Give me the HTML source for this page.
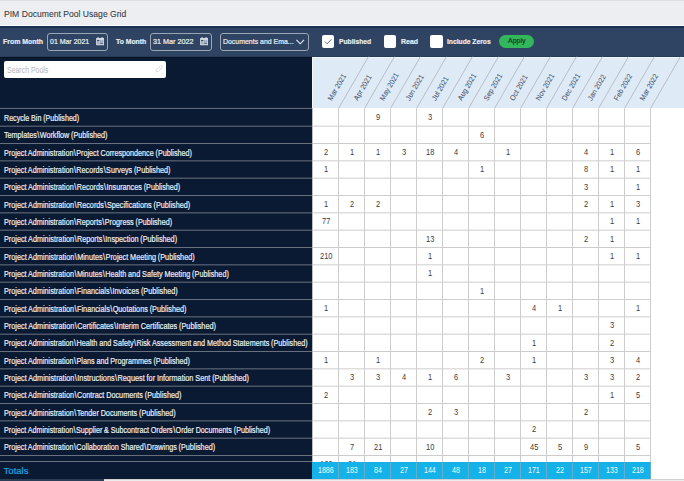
<!DOCTYPE html>
<html><head><meta charset="utf-8"><style>
*{margin:0;padding:0;box-sizing:border-box}
html,body{width:684px;height:481px;overflow:hidden;background:#fff;font-family:"Liberation Sans", sans-serif}
.a{position:absolute}
.t{position:absolute;white-space:pre;line-height:1;transform-origin:0 0}
.hl{position:absolute;white-space:pre;line-height:1;transform-origin:0 0}
</style></head><body>
<div class="a" style="left:0;top:0;width:684px;height:1px;background:#dcdee2"></div>
<div class="a" style="left:0;top:1px;width:684px;height:23.8px;background:#eceef1"></div>
<div class="a" style="left:0;top:24.5px;width:684px;height:1.9px;background:#fdfdfe"></div>
<div class="a" style="left:0;top:26.4px;width:684px;height:30.4px;background:#2f4462"></div>
<div class="a" style="left:0;top:26.4px;width:684px;height:1.2px;background:#1e3151"></div>
<div class="a" style="left:0;top:55.8px;width:684px;height:1px;background:#283c59"></div>
<div class="a" style="left:0;top:56.6px;width:312px;height:423px;background:#0b1a33"></div>
<div class="a" style="left:0;top:56.6px;width:312px;height:1px;background:#071224"></div>
<div class="a" style="left:312px;top:56.7px;width:372px;height:51.8px;background:#deeaf6"></div>
<div class="a" style="left:312px;top:56.7px;width:372px;height:1px;background:#eef4fa"></div>
<div class="a" style="left:312px;top:56.7px;width:1px;height:52px;background:#f2f6fb"></div>
<div class="a" style="left:46.9px;top:33.1px;width:61.30px;height:17.80px;border:1px solid #9aa5b3;border-radius:3px"></div>
<div class="a" style="left:150.2px;top:33.1px;width:61.40px;height:17.80px;border:1px solid #9aa5b3;border-radius:3px"></div>
<div class="a" style="left:220.1px;top:33.2px;width:88.60px;height:17.50px;border:1px solid #9aa5b3;border-radius:3px"></div>
<svg class="a" style="left:95.8px;top:37.2px" width="8.4" height="8.4" viewBox="0 0 8.4 8.4"><rect x="0.1" y="0.9" width="8.1" height="7.3" rx="0.5" fill="#d3dae4"/><rect x="1.4" y="0" width="1.4" height="1.6" rx="0.5" fill="#d3dae4"/><rect x="5.4" y="0" width="1.4" height="1.6" rx="0.5" fill="#d3dae4"/><rect x="1.0" y="2.9" width="6.3" height="4.4" fill="#9aa8bb"/><rect x="3.2" y="2.9" width="0.6" height="4.4" fill="#c5cdd8"/><rect x="5.2" y="2.9" width="0.6" height="4.4" fill="#c5cdd8"/><rect x="1.0" y="4.9" width="6.3" height="0.6" fill="#c5cdd8"/><rect x="1.2" y="3.0" width="2.0" height="1.0" fill="#33486a"/><rect x="4.5" y="5.7" width="2.0" height="1.0" fill="#33486a"/></svg>
<svg class="a" style="left:199.7px;top:37.2px" width="8.4" height="8.4" viewBox="0 0 8.4 8.4"><rect x="0.1" y="0.9" width="8.1" height="7.3" rx="0.5" fill="#d3dae4"/><rect x="1.4" y="0" width="1.4" height="1.6" rx="0.5" fill="#d3dae4"/><rect x="5.4" y="0" width="1.4" height="1.6" rx="0.5" fill="#d3dae4"/><rect x="1.0" y="2.9" width="6.3" height="4.4" fill="#9aa8bb"/><rect x="3.2" y="2.9" width="0.6" height="4.4" fill="#c5cdd8"/><rect x="5.2" y="2.9" width="0.6" height="4.4" fill="#c5cdd8"/><rect x="1.0" y="4.9" width="6.3" height="0.6" fill="#c5cdd8"/><rect x="1.2" y="3.0" width="2.0" height="1.0" fill="#33486a"/><rect x="4.5" y="5.7" width="2.0" height="1.0" fill="#33486a"/></svg>
<svg class="a" style="left:295.8px;top:38.6px" width="9" height="6" viewBox="0 0 9 6"><polyline points="0.4,0.9 4.2,4.8 8.0,0.9" fill="none" stroke="#e8ecf1" stroke-width="1.1"/></svg>
<div class="a" style="left:321.8px;top:35.3px;width:12.6px;height:12.9px;background:#fff;border-radius:2px"></div>
<svg class="a" style="left:321.8px;top:35.3px" width="12.6" height="12.9" viewBox="0 0 12.6 12.9"><polyline points="3.0,6.6 5.1,8.8 9.4,4.3" fill="none" stroke="#5f6874" stroke-width="1"/></svg>
<div class="a" style="left:383.8px;top:35.3px;width:12.6px;height:12.9px;background:#fff;border-radius:2px"></div>
<div class="a" style="left:430.2px;top:35.3px;width:12.6px;height:12.9px;background:#fff;border-radius:2px"></div>
<div class="a" style="left:498.6px;top:35px;width:35.8px;height:13.2px;background:#33b75c;border-radius:7px"></div>
<div class="a" style="left:3.9px;top:60.8px;width:162.6px;height:17.1px;background:#fff;border-radius:2px"></div>
<svg class="a" style="left:153.8px;top:64.4px" width="10" height="10" viewBox="0 0 10 10"><g transform="rotate(-45 5 5)"><path d="M0.9,5 L2.4,3.8 L8.6,3.8 Q9.3,3.8 9.3,5 Q9.3,6.2 8.6,6.2 L2.4,6.2 Z" fill="none" stroke="#cfd1d4" stroke-width="0.75"/></g></svg>
<div class="t" style="left:3.91px;top:8.72px;font-size:9.9px;font-weight:400;color:#3a3d43;-webkit-text-stroke:0.2px #3a3d43;transform:scaleX(0.8705);-webkit-text-stroke:0.1px #3a3d43">PIM Document Pool Usage Grid</div>
<div class="t" style="left:3.25px;top:38.04px;font-size:7.4px;font-weight:700;color:#e9edf3;-webkit-text-stroke:0.2px #e9edf3;transform:scaleX(0.9351);">From Month</div>
<div class="t" style="left:49.56px;top:37.87px;font-size:7.6px;font-weight:400;color:#eef1f5;-webkit-text-stroke:0.2px #eef1f5;transform:scaleX(0.9178);">01 Mar 2021</div>
<div class="t" style="left:116.33px;top:38.04px;font-size:7.4px;font-weight:700;color:#e9edf3;-webkit-text-stroke:0.2px #e9edf3;transform:scaleX(0.9251);">To Month</div>
<div class="t" style="left:153.15px;top:37.87px;font-size:7.6px;font-weight:400;color:#eef1f5;-webkit-text-stroke:0.2px #eef1f5;transform:scaleX(0.9488);">31 Mar 2022</div>
<div class="t" style="left:222.94px;top:37.77px;font-size:7.6px;font-weight:400;color:#eef1f5;-webkit-text-stroke:0.2px #eef1f5;transform:scaleX(0.9141);">Documents and Ema...</div>
<div class="t" style="left:338.66px;top:38.04px;font-size:7.4px;font-weight:700;color:#e9edf3;-webkit-text-stroke:0.2px #e9edf3;transform:scaleX(0.9130);">Published</div>
<div class="t" style="left:400.55px;top:38.04px;font-size:7.4px;font-weight:700;color:#e9edf3;-webkit-text-stroke:0.2px #e9edf3;transform:scaleX(0.9400);">Read</div>
<div class="t" style="left:446.76px;top:38.04px;font-size:7.4px;font-weight:700;color:#e9edf3;-webkit-text-stroke:0.2px #e9edf3;transform:scaleX(0.9079);">Include Zeros</div>
<div class="t" style="left:507.70px;top:37.17px;font-size:7.6px;font-weight:400;color:#173622;-webkit-text-stroke:0.2px #173622;transform:scaleX(0.9258);">Apply</div>
<div class="t" style="left:6.89px;top:65.57px;font-size:8.3px;font-weight:400;color:#b1b3b6;-webkit-text-stroke:0.2px #b1b3b6;transform:scaleX(0.8377);-webkit-text-stroke:0px">Search Pools</div>
<svg class="a" style="left:0;top:0" width="684" height="481" viewBox="0 0 684 481"><line x1="338.50" y1="108.5" x2="368.41" y2="56.7" stroke="#aeb3ba" stroke-width="0.8"/><line x1="364.50" y1="108.5" x2="394.41" y2="56.7" stroke="#aeb3ba" stroke-width="0.8"/><line x1="390.50" y1="108.5" x2="420.41" y2="56.7" stroke="#aeb3ba" stroke-width="0.8"/><line x1="416.50" y1="108.5" x2="446.41" y2="56.7" stroke="#aeb3ba" stroke-width="0.8"/><line x1="442.50" y1="108.5" x2="472.41" y2="56.7" stroke="#aeb3ba" stroke-width="0.8"/><line x1="468.50" y1="108.5" x2="498.41" y2="56.7" stroke="#aeb3ba" stroke-width="0.8"/><line x1="494.50" y1="108.5" x2="524.41" y2="56.7" stroke="#aeb3ba" stroke-width="0.8"/><line x1="520.50" y1="108.5" x2="550.41" y2="56.7" stroke="#aeb3ba" stroke-width="0.8"/><line x1="546.50" y1="108.5" x2="576.41" y2="56.7" stroke="#aeb3ba" stroke-width="0.8"/><line x1="572.50" y1="108.5" x2="602.41" y2="56.7" stroke="#aeb3ba" stroke-width="0.8"/><line x1="598.50" y1="108.5" x2="628.41" y2="56.7" stroke="#aeb3ba" stroke-width="0.8"/><line x1="624.50" y1="108.5" x2="654.41" y2="56.7" stroke="#aeb3ba" stroke-width="0.8"/><line x1="650.50" y1="108.5" x2="680.41" y2="56.7" stroke="#aeb3ba" stroke-width="0.8"/></svg>
<div class="hl" style="left:332.20px;top:95.24px;font-size:7.4px;color:#475670;transform-origin:0 6.26px;transform:rotate(-60deg) scaleX(0.94);-webkit-text-stroke:0.06px #475670">Mar 2021</div>
<div class="hl" style="left:358.20px;top:95.24px;font-size:7.4px;color:#475670;transform-origin:0 6.26px;transform:rotate(-60deg) scaleX(0.94);-webkit-text-stroke:0.06px #475670">Apr 2021</div>
<div class="hl" style="left:384.20px;top:95.24px;font-size:7.4px;color:#475670;transform-origin:0 6.26px;transform:rotate(-60deg) scaleX(0.94);-webkit-text-stroke:0.06px #475670">May 2021</div>
<div class="hl" style="left:410.20px;top:95.24px;font-size:7.4px;color:#475670;transform-origin:0 6.26px;transform:rotate(-60deg) scaleX(0.94);-webkit-text-stroke:0.06px #475670">Jun 2021</div>
<div class="hl" style="left:436.20px;top:95.24px;font-size:7.4px;color:#475670;transform-origin:0 6.26px;transform:rotate(-60deg) scaleX(0.94);-webkit-text-stroke:0.06px #475670">Jul 2021</div>
<div class="hl" style="left:462.20px;top:95.24px;font-size:7.4px;color:#475670;transform-origin:0 6.26px;transform:rotate(-60deg) scaleX(0.94);-webkit-text-stroke:0.06px #475670">Aug 2021</div>
<div class="hl" style="left:488.20px;top:95.24px;font-size:7.4px;color:#475670;transform-origin:0 6.26px;transform:rotate(-60deg) scaleX(0.94);-webkit-text-stroke:0.06px #475670">Sep 2021</div>
<div class="hl" style="left:514.20px;top:95.24px;font-size:7.4px;color:#475670;transform-origin:0 6.26px;transform:rotate(-60deg) scaleX(0.94);-webkit-text-stroke:0.06px #475670">Oct 2021</div>
<div class="hl" style="left:540.20px;top:95.24px;font-size:7.4px;color:#475670;transform-origin:0 6.26px;transform:rotate(-60deg) scaleX(0.94);-webkit-text-stroke:0.06px #475670">Nov 2021</div>
<div class="hl" style="left:566.20px;top:95.24px;font-size:7.4px;color:#475670;transform-origin:0 6.26px;transform:rotate(-60deg) scaleX(0.94);-webkit-text-stroke:0.06px #475670">Dec 2021</div>
<div class="hl" style="left:592.20px;top:95.24px;font-size:7.4px;color:#475670;transform-origin:0 6.26px;transform:rotate(-60deg) scaleX(0.94);-webkit-text-stroke:0.06px #475670">Jan 2022</div>
<div class="hl" style="left:618.20px;top:95.24px;font-size:7.4px;color:#475670;transform-origin:0 6.26px;transform:rotate(-60deg) scaleX(0.94);-webkit-text-stroke:0.06px #475670">Feb 2022</div>
<div class="hl" style="left:644.20px;top:95.24px;font-size:7.4px;color:#475670;transform-origin:0 6.26px;transform:rotate(-60deg) scaleX(0.94);-webkit-text-stroke:0.06px #475670">Mar 2022</div>
<div class="t" style="left:3.93px;top:114.02px;font-size:8.3px;font-weight:400;color:#eceef2;-webkit-text-stroke:0.2px #eceef2;transform:scaleX(0.8572);word-spacing:-0.2px;">Recycle Bin (Published)</div>
<div class="t" style="left:375.93px;top:113.32px;font-size:8.3px;color:#3c3c3c;-webkit-text-stroke:0.0px #3c3c3c;transform:scaleX(0.9000);">9</div>
<div class="t" style="left:427.95px;top:113.32px;font-size:8.3px;color:#3c3c3c;-webkit-text-stroke:0.0px #3c3c3c;transform:scaleX(0.9000);">3</div>
<div class="t" style="left:4.36px;top:131.36px;font-size:8.3px;font-weight:400;color:#eceef2;-webkit-text-stroke:0.2px #eceef2;transform:scaleX(0.8680);word-spacing:-0.2px;">Templates<span style="margin:0 0.5px">\</span>Workflow (Published)</div>
<div class="t" style="left:479.89px;top:130.66px;font-size:8.3px;color:#3c3c3c;-webkit-text-stroke:0.0px #3c3c3c;transform:scaleX(0.9000);">6</div>
<div class="t" style="left:3.92px;top:148.69px;font-size:8.3px;font-weight:400;color:#eceef2;-webkit-text-stroke:0.2px #eceef2;transform:scaleX(0.8673);word-spacing:-0.2px;">Project Administration<span style="margin:0 0.5px">\</span>Project Correspondence (Published)</div>
<div class="t" style="left:323.91px;top:147.99px;font-size:8.3px;color:#3c3c3c;-webkit-text-stroke:0.0px #3c3c3c;transform:scaleX(0.9000);">2</div>
<div class="t" style="left:349.82px;top:147.99px;font-size:8.3px;color:#3c3c3c;-webkit-text-stroke:0.0px #3c3c3c;transform:scaleX(0.9000);">1</div>
<div class="t" style="left:375.82px;top:147.99px;font-size:8.3px;color:#3c3c3c;-webkit-text-stroke:0.0px #3c3c3c;transform:scaleX(0.9000);">1</div>
<div class="t" style="left:401.95px;top:147.99px;font-size:8.3px;color:#3c3c3c;-webkit-text-stroke:0.0px #3c3c3c;transform:scaleX(0.9000);">3</div>
<div class="t" style="left:425.72px;top:147.99px;font-size:8.3px;color:#3c3c3c;-webkit-text-stroke:0.0px #3c3c3c;transform:scaleX(0.9000);">18</div>
<div class="t" style="left:453.95px;top:147.99px;font-size:8.3px;color:#3c3c3c;-webkit-text-stroke:0.0px #3c3c3c;transform:scaleX(0.9000);">4</div>
<div class="t" style="left:505.82px;top:147.99px;font-size:8.3px;color:#3c3c3c;-webkit-text-stroke:0.0px #3c3c3c;transform:scaleX(0.9000);">1</div>
<div class="t" style="left:583.95px;top:147.99px;font-size:8.3px;color:#3c3c3c;-webkit-text-stroke:0.0px #3c3c3c;transform:scaleX(0.9000);">4</div>
<div class="t" style="left:609.82px;top:147.99px;font-size:8.3px;color:#3c3c3c;-webkit-text-stroke:0.0px #3c3c3c;transform:scaleX(0.9000);">1</div>
<div class="t" style="left:635.89px;top:147.99px;font-size:8.3px;color:#3c3c3c;-webkit-text-stroke:0.0px #3c3c3c;transform:scaleX(0.9000);">6</div>
<div class="t" style="left:3.92px;top:166.02px;font-size:8.3px;font-weight:400;color:#eceef2;-webkit-text-stroke:0.2px #eceef2;transform:scaleX(0.8682);word-spacing:-0.2px;">Project Administration<span style="margin:0 0.5px">\</span>Records<span style="margin:0 0.5px">\</span>Surveys (Published)</div>
<div class="t" style="left:323.82px;top:165.32px;font-size:8.3px;color:#3c3c3c;-webkit-text-stroke:0.0px #3c3c3c;transform:scaleX(0.9000);">1</div>
<div class="t" style="left:479.82px;top:165.32px;font-size:8.3px;color:#3c3c3c;-webkit-text-stroke:0.0px #3c3c3c;transform:scaleX(0.9000);">1</div>
<div class="t" style="left:583.93px;top:165.32px;font-size:8.3px;color:#3c3c3c;-webkit-text-stroke:0.0px #3c3c3c;transform:scaleX(0.9000);">8</div>
<div class="t" style="left:609.82px;top:165.32px;font-size:8.3px;color:#3c3c3c;-webkit-text-stroke:0.0px #3c3c3c;transform:scaleX(0.9000);">1</div>
<div class="t" style="left:635.82px;top:165.32px;font-size:8.3px;color:#3c3c3c;-webkit-text-stroke:0.0px #3c3c3c;transform:scaleX(0.9000);">1</div>
<div class="t" style="left:3.92px;top:183.36px;font-size:8.3px;font-weight:400;color:#eceef2;-webkit-text-stroke:0.2px #eceef2;transform:scaleX(0.8716);word-spacing:-0.2px;">Project Administration<span style="margin:0 0.5px">\</span>Records<span style="margin:0 0.5px">\</span>Insurances (Published)</div>
<div class="t" style="left:583.95px;top:182.66px;font-size:8.3px;color:#3c3c3c;-webkit-text-stroke:0.0px #3c3c3c;transform:scaleX(0.9000);">3</div>
<div class="t" style="left:635.82px;top:182.66px;font-size:8.3px;color:#3c3c3c;-webkit-text-stroke:0.0px #3c3c3c;transform:scaleX(0.9000);">1</div>
<div class="t" style="left:3.92px;top:200.69px;font-size:8.3px;font-weight:400;color:#eceef2;-webkit-text-stroke:0.2px #eceef2;transform:scaleX(0.8751);word-spacing:-0.2px;">Project Administration<span style="margin:0 0.5px">\</span>Records<span style="margin:0 0.5px">\</span>Specifications (Published)</div>
<div class="t" style="left:323.82px;top:199.99px;font-size:8.3px;color:#3c3c3c;-webkit-text-stroke:0.0px #3c3c3c;transform:scaleX(0.9000);">1</div>
<div class="t" style="left:349.91px;top:199.99px;font-size:8.3px;color:#3c3c3c;-webkit-text-stroke:0.0px #3c3c3c;transform:scaleX(0.9000);">2</div>
<div class="t" style="left:375.91px;top:199.99px;font-size:8.3px;color:#3c3c3c;-webkit-text-stroke:0.0px #3c3c3c;transform:scaleX(0.9000);">2</div>
<div class="t" style="left:583.91px;top:199.99px;font-size:8.3px;color:#3c3c3c;-webkit-text-stroke:0.0px #3c3c3c;transform:scaleX(0.9000);">2</div>
<div class="t" style="left:609.82px;top:199.99px;font-size:8.3px;color:#3c3c3c;-webkit-text-stroke:0.0px #3c3c3c;transform:scaleX(0.9000);">1</div>
<div class="t" style="left:635.95px;top:199.99px;font-size:8.3px;color:#3c3c3c;-webkit-text-stroke:0.0px #3c3c3c;transform:scaleX(0.9000);">3</div>
<div class="t" style="left:3.92px;top:218.02px;font-size:8.3px;font-weight:400;color:#eceef2;-webkit-text-stroke:0.2px #eceef2;transform:scaleX(0.8708);word-spacing:-0.2px;">Project Administration<span style="margin:0 0.5px">\</span>Reports<span style="margin:0 0.5px">\</span>Progress (Published)</div>
<div class="t" style="left:321.83px;top:217.32px;font-size:8.3px;color:#3c3c3c;-webkit-text-stroke:0.0px #3c3c3c;transform:scaleX(0.9000);">77</div>
<div class="t" style="left:609.82px;top:217.32px;font-size:8.3px;color:#3c3c3c;-webkit-text-stroke:0.0px #3c3c3c;transform:scaleX(0.9000);">1</div>
<div class="t" style="left:635.82px;top:217.32px;font-size:8.3px;color:#3c3c3c;-webkit-text-stroke:0.0px #3c3c3c;transform:scaleX(0.9000);">1</div>
<div class="t" style="left:3.92px;top:235.36px;font-size:8.3px;font-weight:400;color:#eceef2;-webkit-text-stroke:0.2px #eceef2;transform:scaleX(0.8757);word-spacing:-0.2px;">Project Administration<span style="margin:0 0.5px">\</span>Reports<span style="margin:0 0.5px">\</span>Inspection (Published)</div>
<div class="t" style="left:425.72px;top:234.66px;font-size:8.3px;color:#3c3c3c;-webkit-text-stroke:0.0px #3c3c3c;transform:scaleX(0.9000);">13</div>
<div class="t" style="left:583.91px;top:234.66px;font-size:8.3px;color:#3c3c3c;-webkit-text-stroke:0.0px #3c3c3c;transform:scaleX(0.9000);">2</div>
<div class="t" style="left:609.82px;top:234.66px;font-size:8.3px;color:#3c3c3c;-webkit-text-stroke:0.0px #3c3c3c;transform:scaleX(0.9000);">1</div>
<div class="t" style="left:3.92px;top:252.69px;font-size:8.3px;font-weight:400;color:#eceef2;-webkit-text-stroke:0.2px #eceef2;transform:scaleX(0.8776);word-spacing:-0.2px;">Project Administration<span style="margin:0 0.5px">\</span>Minutes<span style="margin:0 0.5px">\</span>Project Meeting (Published)</div>
<div class="t" style="left:319.72px;top:251.99px;font-size:8.3px;color:#3c3c3c;-webkit-text-stroke:0.0px #3c3c3c;transform:scaleX(0.9000);">210</div>
<div class="t" style="left:427.82px;top:251.99px;font-size:8.3px;color:#3c3c3c;-webkit-text-stroke:0.0px #3c3c3c;transform:scaleX(0.9000);">1</div>
<div class="t" style="left:609.82px;top:251.99px;font-size:8.3px;color:#3c3c3c;-webkit-text-stroke:0.0px #3c3c3c;transform:scaleX(0.9000);">1</div>
<div class="t" style="left:635.82px;top:251.99px;font-size:8.3px;color:#3c3c3c;-webkit-text-stroke:0.0px #3c3c3c;transform:scaleX(0.9000);">1</div>
<div class="t" style="left:3.92px;top:270.02px;font-size:8.3px;font-weight:400;color:#eceef2;-webkit-text-stroke:0.2px #eceef2;transform:scaleX(0.8749);word-spacing:-0.2px;">Project Administration<span style="margin:0 0.5px">\</span>Minutes<span style="margin:0 0.5px">\</span>Health and Safety Meeting (Published)</div>
<div class="t" style="left:427.82px;top:269.32px;font-size:8.3px;color:#3c3c3c;-webkit-text-stroke:0.0px #3c3c3c;transform:scaleX(0.9000);">1</div>
<div class="t" style="left:3.92px;top:287.36px;font-size:8.3px;font-weight:400;color:#eceef2;-webkit-text-stroke:0.2px #eceef2;transform:scaleX(0.8747);word-spacing:-0.2px;">Project Administration<span style="margin:0 0.5px">\</span>Financials<span style="margin:0 0.5px">\</span>Invoices (Published)</div>
<div class="t" style="left:479.82px;top:286.66px;font-size:8.3px;color:#3c3c3c;-webkit-text-stroke:0.0px #3c3c3c;transform:scaleX(0.9000);">1</div>
<div class="t" style="left:3.92px;top:304.69px;font-size:8.3px;font-weight:400;color:#eceef2;-webkit-text-stroke:0.2px #eceef2;transform:scaleX(0.8762);word-spacing:-0.2px;">Project Administration<span style="margin:0 0.5px">\</span>Financials<span style="margin:0 0.5px">\</span>Quotations (Published)</div>
<div class="t" style="left:323.82px;top:303.99px;font-size:8.3px;color:#3c3c3c;-webkit-text-stroke:0.0px #3c3c3c;transform:scaleX(0.9000);">1</div>
<div class="t" style="left:531.95px;top:303.99px;font-size:8.3px;color:#3c3c3c;-webkit-text-stroke:0.0px #3c3c3c;transform:scaleX(0.9000);">4</div>
<div class="t" style="left:557.82px;top:303.99px;font-size:8.3px;color:#3c3c3c;-webkit-text-stroke:0.0px #3c3c3c;transform:scaleX(0.9000);">1</div>
<div class="t" style="left:635.82px;top:303.99px;font-size:8.3px;color:#3c3c3c;-webkit-text-stroke:0.0px #3c3c3c;transform:scaleX(0.9000);">1</div>
<div class="t" style="left:3.92px;top:322.02px;font-size:8.3px;font-weight:400;color:#eceef2;-webkit-text-stroke:0.2px #eceef2;transform:scaleX(0.8787);word-spacing:-0.2px;">Project Administration<span style="margin:0 0.5px">\</span>Certificates<span style="margin:0 0.5px">\</span>Interim Certificates (Published)</div>
<div class="t" style="left:609.95px;top:321.32px;font-size:8.3px;color:#3c3c3c;-webkit-text-stroke:0.0px #3c3c3c;transform:scaleX(0.9000);">3</div>
<div class="t" style="left:3.92px;top:339.36px;font-size:8.3px;font-weight:400;color:#eceef2;-webkit-text-stroke:0.2px #eceef2;transform:scaleX(0.8698);word-spacing:-0.2px;">Project Administration<span style="margin:0 0.5px">\</span>Health and Safety<span style="margin:0 0.5px">\</span>Risk Assessment and Method Statements (Published)</div>
<div class="t" style="left:531.82px;top:338.66px;font-size:8.3px;color:#3c3c3c;-webkit-text-stroke:0.0px #3c3c3c;transform:scaleX(0.9000);">1</div>
<div class="t" style="left:609.91px;top:338.66px;font-size:8.3px;color:#3c3c3c;-webkit-text-stroke:0.0px #3c3c3c;transform:scaleX(0.9000);">2</div>
<div class="t" style="left:3.92px;top:356.69px;font-size:8.3px;font-weight:400;color:#eceef2;-webkit-text-stroke:0.2px #eceef2;transform:scaleX(0.8700);word-spacing:-0.2px;">Project Administration<span style="margin:0 0.5px">\</span>Plans and Programmes (Published)</div>
<div class="t" style="left:323.82px;top:355.99px;font-size:8.3px;color:#3c3c3c;-webkit-text-stroke:0.0px #3c3c3c;transform:scaleX(0.9000);">1</div>
<div class="t" style="left:375.82px;top:355.99px;font-size:8.3px;color:#3c3c3c;-webkit-text-stroke:0.0px #3c3c3c;transform:scaleX(0.9000);">1</div>
<div class="t" style="left:479.91px;top:355.99px;font-size:8.3px;color:#3c3c3c;-webkit-text-stroke:0.0px #3c3c3c;transform:scaleX(0.9000);">2</div>
<div class="t" style="left:531.82px;top:355.99px;font-size:8.3px;color:#3c3c3c;-webkit-text-stroke:0.0px #3c3c3c;transform:scaleX(0.9000);">1</div>
<div class="t" style="left:609.95px;top:355.99px;font-size:8.3px;color:#3c3c3c;-webkit-text-stroke:0.0px #3c3c3c;transform:scaleX(0.9000);">3</div>
<div class="t" style="left:635.95px;top:355.99px;font-size:8.3px;color:#3c3c3c;-webkit-text-stroke:0.0px #3c3c3c;transform:scaleX(0.9000);">4</div>
<div class="t" style="left:3.92px;top:374.02px;font-size:8.3px;font-weight:400;color:#eceef2;-webkit-text-stroke:0.2px #eceef2;transform:scaleX(0.8794);word-spacing:-0.2px;">Project Administration<span style="margin:0 0.5px">\</span>Instructions<span style="margin:0 0.5px">\</span>Request for Information Sent (Published)</div>
<div class="t" style="left:349.95px;top:373.32px;font-size:8.3px;color:#3c3c3c;-webkit-text-stroke:0.0px #3c3c3c;transform:scaleX(0.9000);">3</div>
<div class="t" style="left:375.95px;top:373.32px;font-size:8.3px;color:#3c3c3c;-webkit-text-stroke:0.0px #3c3c3c;transform:scaleX(0.9000);">3</div>
<div class="t" style="left:401.95px;top:373.32px;font-size:8.3px;color:#3c3c3c;-webkit-text-stroke:0.0px #3c3c3c;transform:scaleX(0.9000);">4</div>
<div class="t" style="left:427.82px;top:373.32px;font-size:8.3px;color:#3c3c3c;-webkit-text-stroke:0.0px #3c3c3c;transform:scaleX(0.9000);">1</div>
<div class="t" style="left:453.89px;top:373.32px;font-size:8.3px;color:#3c3c3c;-webkit-text-stroke:0.0px #3c3c3c;transform:scaleX(0.9000);">6</div>
<div class="t" style="left:505.95px;top:373.32px;font-size:8.3px;color:#3c3c3c;-webkit-text-stroke:0.0px #3c3c3c;transform:scaleX(0.9000);">3</div>
<div class="t" style="left:583.95px;top:373.32px;font-size:8.3px;color:#3c3c3c;-webkit-text-stroke:0.0px #3c3c3c;transform:scaleX(0.9000);">3</div>
<div class="t" style="left:609.95px;top:373.32px;font-size:8.3px;color:#3c3c3c;-webkit-text-stroke:0.0px #3c3c3c;transform:scaleX(0.9000);">3</div>
<div class="t" style="left:635.91px;top:373.32px;font-size:8.3px;color:#3c3c3c;-webkit-text-stroke:0.0px #3c3c3c;transform:scaleX(0.9000);">2</div>
<div class="t" style="left:3.92px;top:391.36px;font-size:8.3px;font-weight:400;color:#eceef2;-webkit-text-stroke:0.2px #eceef2;transform:scaleX(0.8748);word-spacing:-0.2px;">Project Administration<span style="margin:0 0.5px">\</span>Contract Documents (Published)</div>
<div class="t" style="left:323.91px;top:390.66px;font-size:8.3px;color:#3c3c3c;-webkit-text-stroke:0.0px #3c3c3c;transform:scaleX(0.9000);">2</div>
<div class="t" style="left:609.82px;top:390.66px;font-size:8.3px;color:#3c3c3c;-webkit-text-stroke:0.0px #3c3c3c;transform:scaleX(0.9000);">1</div>
<div class="t" style="left:635.93px;top:390.66px;font-size:8.3px;color:#3c3c3c;-webkit-text-stroke:0.0px #3c3c3c;transform:scaleX(0.9000);">5</div>
<div class="t" style="left:3.92px;top:408.69px;font-size:8.3px;font-weight:400;color:#eceef2;-webkit-text-stroke:0.2px #eceef2;transform:scaleX(0.8719);word-spacing:-0.2px;">Project Administration<span style="margin:0 0.5px">\</span>Tender Documents (Published)</div>
<div class="t" style="left:427.91px;top:407.99px;font-size:8.3px;color:#3c3c3c;-webkit-text-stroke:0.0px #3c3c3c;transform:scaleX(0.9000);">2</div>
<div class="t" style="left:453.95px;top:407.99px;font-size:8.3px;color:#3c3c3c;-webkit-text-stroke:0.0px #3c3c3c;transform:scaleX(0.9000);">3</div>
<div class="t" style="left:583.91px;top:407.99px;font-size:8.3px;color:#3c3c3c;-webkit-text-stroke:0.0px #3c3c3c;transform:scaleX(0.9000);">2</div>
<div class="t" style="left:3.93px;top:426.02px;font-size:8.3px;font-weight:400;color:#eceef2;-webkit-text-stroke:0.2px #eceef2;transform:scaleX(0.8638);word-spacing:-0.2px;">Project Administration<span style="margin:0 0.5px">\</span>Supplier &amp; Subcontract Orders<span style="margin:0 0.5px">\</span>Order Documents (Published)</div>
<div class="t" style="left:531.91px;top:425.32px;font-size:8.3px;color:#3c3c3c;-webkit-text-stroke:0.0px #3c3c3c;transform:scaleX(0.9000);">2</div>
<div class="t" style="left:3.92px;top:443.36px;font-size:8.3px;font-weight:400;color:#eceef2;-webkit-text-stroke:0.2px #eceef2;transform:scaleX(0.8682);word-spacing:-0.2px;">Project Administration<span style="margin:0 0.5px">\</span>Collaboration Shared<span style="margin:0 0.5px">\</span>Drawings (Published)</div>
<div class="t" style="left:349.91px;top:442.66px;font-size:8.3px;color:#3c3c3c;-webkit-text-stroke:0.0px #3c3c3c;transform:scaleX(0.9000);">7</div>
<div class="t" style="left:373.83px;top:442.66px;font-size:8.3px;color:#3c3c3c;-webkit-text-stroke:0.0px #3c3c3c;transform:scaleX(0.9000);">21</div>
<div class="t" style="left:425.70px;top:442.66px;font-size:8.3px;color:#3c3c3c;-webkit-text-stroke:0.0px #3c3c3c;transform:scaleX(0.9000);">10</div>
<div class="t" style="left:529.92px;top:442.66px;font-size:8.3px;color:#3c3c3c;-webkit-text-stroke:0.0px #3c3c3c;transform:scaleX(0.9000);">45</div>
<div class="t" style="left:557.93px;top:442.66px;font-size:8.3px;color:#3c3c3c;-webkit-text-stroke:0.0px #3c3c3c;transform:scaleX(0.9000);">5</div>
<div class="t" style="left:583.93px;top:442.66px;font-size:8.3px;color:#3c3c3c;-webkit-text-stroke:0.0px #3c3c3c;transform:scaleX(0.9000);">9</div>
<div class="t" style="left:635.93px;top:442.66px;font-size:8.3px;color:#3c3c3c;-webkit-text-stroke:0.0px #3c3c3c;transform:scaleX(0.9000);">5</div>
<div class="t" style="left:3.91px;top:460.69px;font-size:8.3px;font-weight:400;color:#eceef2;-webkit-text-stroke:0.2px #eceef2;transform:scaleX(0.8851);word-spacing:-0.2px;">Project Administration<span style="margin:0 0.5px">\</span>Collaboration Shared<span style="margin:0 0.5px">\</span>Correspondence (Published)</div>
<div class="t" style="left:319.64px;top:459.99px;font-size:8.3px;color:#3c3c3c;-webkit-text-stroke:0.0px #3c3c3c;transform:scaleX(0.9000);">166</div>
<div class="t" style="left:347.83px;top:459.99px;font-size:8.3px;color:#3c3c3c;-webkit-text-stroke:0.0px #3c3c3c;transform:scaleX(0.9000);">21</div>
<svg class="a" style="left:0;top:0" width="684" height="481" viewBox="0 0 684 481"><line x1="0" y1="108.40" x2="312" y2="108.40" stroke="#6a7280" stroke-width="1"/><line x1="0" y1="126.18" x2="312" y2="126.18" stroke="#6a7280" stroke-width="1"/><line x1="312" y1="126.18" x2="651.00" y2="126.18" stroke="#cdcdcd" stroke-width="1"/><line x1="0" y1="143.52" x2="312" y2="143.52" stroke="#6a7280" stroke-width="1"/><line x1="312" y1="143.52" x2="651.00" y2="143.52" stroke="#cdcdcd" stroke-width="1"/><line x1="0" y1="160.85" x2="312" y2="160.85" stroke="#6a7280" stroke-width="1"/><line x1="312" y1="160.85" x2="651.00" y2="160.85" stroke="#cdcdcd" stroke-width="1"/><line x1="0" y1="178.18" x2="312" y2="178.18" stroke="#6a7280" stroke-width="1"/><line x1="312" y1="178.18" x2="651.00" y2="178.18" stroke="#cdcdcd" stroke-width="1"/><line x1="0" y1="195.52" x2="312" y2="195.52" stroke="#6a7280" stroke-width="1"/><line x1="312" y1="195.52" x2="651.00" y2="195.52" stroke="#cdcdcd" stroke-width="1"/><line x1="0" y1="212.85" x2="312" y2="212.85" stroke="#6a7280" stroke-width="1"/><line x1="312" y1="212.85" x2="651.00" y2="212.85" stroke="#cdcdcd" stroke-width="1"/><line x1="0" y1="230.18" x2="312" y2="230.18" stroke="#6a7280" stroke-width="1"/><line x1="312" y1="230.18" x2="651.00" y2="230.18" stroke="#cdcdcd" stroke-width="1"/><line x1="0" y1="247.52" x2="312" y2="247.52" stroke="#6a7280" stroke-width="1"/><line x1="312" y1="247.52" x2="651.00" y2="247.52" stroke="#cdcdcd" stroke-width="1"/><line x1="0" y1="264.85" x2="312" y2="264.85" stroke="#6a7280" stroke-width="1"/><line x1="312" y1="264.85" x2="651.00" y2="264.85" stroke="#cdcdcd" stroke-width="1"/><line x1="0" y1="282.18" x2="312" y2="282.18" stroke="#6a7280" stroke-width="1"/><line x1="312" y1="282.18" x2="651.00" y2="282.18" stroke="#cdcdcd" stroke-width="1"/><line x1="0" y1="299.52" x2="312" y2="299.52" stroke="#6a7280" stroke-width="1"/><line x1="312" y1="299.52" x2="651.00" y2="299.52" stroke="#cdcdcd" stroke-width="1"/><line x1="0" y1="316.85" x2="312" y2="316.85" stroke="#6a7280" stroke-width="1"/><line x1="312" y1="316.85" x2="651.00" y2="316.85" stroke="#cdcdcd" stroke-width="1"/><line x1="0" y1="334.18" x2="312" y2="334.18" stroke="#6a7280" stroke-width="1"/><line x1="312" y1="334.18" x2="651.00" y2="334.18" stroke="#cdcdcd" stroke-width="1"/><line x1="0" y1="351.52" x2="312" y2="351.52" stroke="#6a7280" stroke-width="1"/><line x1="312" y1="351.52" x2="651.00" y2="351.52" stroke="#cdcdcd" stroke-width="1"/><line x1="0" y1="368.85" x2="312" y2="368.85" stroke="#6a7280" stroke-width="1"/><line x1="312" y1="368.85" x2="651.00" y2="368.85" stroke="#cdcdcd" stroke-width="1"/><line x1="0" y1="386.18" x2="312" y2="386.18" stroke="#6a7280" stroke-width="1"/><line x1="312" y1="386.18" x2="651.00" y2="386.18" stroke="#cdcdcd" stroke-width="1"/><line x1="0" y1="403.52" x2="312" y2="403.52" stroke="#6a7280" stroke-width="1"/><line x1="312" y1="403.52" x2="651.00" y2="403.52" stroke="#cdcdcd" stroke-width="1"/><line x1="0" y1="420.85" x2="312" y2="420.85" stroke="#6a7280" stroke-width="1"/><line x1="312" y1="420.85" x2="651.00" y2="420.85" stroke="#cdcdcd" stroke-width="1"/><line x1="0" y1="438.18" x2="312" y2="438.18" stroke="#6a7280" stroke-width="1"/><line x1="312" y1="438.18" x2="651.00" y2="438.18" stroke="#cdcdcd" stroke-width="1"/><line x1="0" y1="455.52" x2="312" y2="455.52" stroke="#6a7280" stroke-width="1"/><line x1="312" y1="455.52" x2="651.00" y2="455.52" stroke="#cdcdcd" stroke-width="1"/><line x1="338.50" y1="108.85" x2="338.50" y2="479" stroke="#cdcdcd" stroke-width="1"/><line x1="364.50" y1="108.85" x2="364.50" y2="479" stroke="#cdcdcd" stroke-width="1"/><line x1="390.50" y1="108.85" x2="390.50" y2="479" stroke="#cdcdcd" stroke-width="1"/><line x1="416.50" y1="108.85" x2="416.50" y2="479" stroke="#cdcdcd" stroke-width="1"/><line x1="442.50" y1="108.85" x2="442.50" y2="479" stroke="#cdcdcd" stroke-width="1"/><line x1="468.50" y1="108.85" x2="468.50" y2="479" stroke="#cdcdcd" stroke-width="1"/><line x1="494.50" y1="108.85" x2="494.50" y2="479" stroke="#cdcdcd" stroke-width="1"/><line x1="520.50" y1="108.85" x2="520.50" y2="479" stroke="#cdcdcd" stroke-width="1"/><line x1="546.50" y1="108.85" x2="546.50" y2="479" stroke="#cdcdcd" stroke-width="1"/><line x1="572.50" y1="108.85" x2="572.50" y2="479" stroke="#cdcdcd" stroke-width="1"/><line x1="598.50" y1="108.85" x2="598.50" y2="479" stroke="#cdcdcd" stroke-width="1"/><line x1="624.50" y1="108.85" x2="624.50" y2="479" stroke="#cdcdcd" stroke-width="1"/><line x1="650.50" y1="108.85" x2="650.50" y2="479" stroke="#cdcdcd" stroke-width="1"/><line x1="312.5" y1="108" x2="312.5" y2="479" stroke="#b9bcc2" stroke-width="1"/></svg>
<div class="a" style="left:0;top:462.3px;width:312px;height:16.50px;background:#0b1a33"></div>
<div class="a" style="left:0;top:461.20px;width:312px;height:1.1px;background:#6a7280"></div>
<div class="t" style="left:3.61px;top:465.76px;font-size:9.5px;font-weight:400;color:#1ca6e0;-webkit-text-stroke:0.2px #1ca6e0;">Totals</div>
<div class="a" style="left:312px;top:462.3px;width:339.00px;height:16.50px;background:#14b2e8"></div>
<svg class="a" style="left:0;top:0" width="684" height="481" viewBox="0 0 684 481"><line x1="338.50" y1="462.3" x2="338.50" y2="478.8" stroke="#62aecb" stroke-width="1"/><line x1="364.50" y1="462.3" x2="364.50" y2="478.8" stroke="#62aecb" stroke-width="1"/><line x1="390.50" y1="462.3" x2="390.50" y2="478.8" stroke="#62aecb" stroke-width="1"/><line x1="416.50" y1="462.3" x2="416.50" y2="478.8" stroke="#62aecb" stroke-width="1"/><line x1="442.50" y1="462.3" x2="442.50" y2="478.8" stroke="#62aecb" stroke-width="1"/><line x1="468.50" y1="462.3" x2="468.50" y2="478.8" stroke="#62aecb" stroke-width="1"/><line x1="494.50" y1="462.3" x2="494.50" y2="478.8" stroke="#62aecb" stroke-width="1"/><line x1="520.50" y1="462.3" x2="520.50" y2="478.8" stroke="#62aecb" stroke-width="1"/><line x1="546.50" y1="462.3" x2="546.50" y2="478.8" stroke="#62aecb" stroke-width="1"/><line x1="572.50" y1="462.3" x2="572.50" y2="478.8" stroke="#62aecb" stroke-width="1"/><line x1="598.50" y1="462.3" x2="598.50" y2="478.8" stroke="#62aecb" stroke-width="1"/><line x1="624.50" y1="462.3" x2="624.50" y2="478.8" stroke="#62aecb" stroke-width="1"/><line x1="650.50" y1="462.3" x2="650.50" y2="478.8" stroke="#62aecb" stroke-width="1"/></svg>
<div class="t" style="left:317.93px;top:466.07px;font-size:8.3px;color:#f2fafd;-webkit-text-stroke:0.0px #f2fafd;transform:scaleX(0.8500);">1886</div>
<div class="t" style="left:345.90px;top:466.07px;font-size:8.3px;color:#f2fafd;-webkit-text-stroke:0.0px #f2fafd;transform:scaleX(0.8500);">183</div>
<div class="t" style="left:373.93px;top:466.07px;font-size:8.3px;color:#f2fafd;-webkit-text-stroke:0.0px #f2fafd;transform:scaleX(0.8500);">84</div>
<div class="t" style="left:399.96px;top:466.07px;font-size:8.3px;color:#f2fafd;-webkit-text-stroke:0.0px #f2fafd;transform:scaleX(0.8500);">27</div>
<div class="t" style="left:423.84px;top:466.07px;font-size:8.3px;color:#f2fafd;-webkit-text-stroke:0.0px #f2fafd;transform:scaleX(0.8500);">144</div>
<div class="t" style="left:452.05px;top:466.07px;font-size:8.3px;color:#f2fafd;-webkit-text-stroke:0.0px #f2fafd;transform:scaleX(0.8500);">48</div>
<div class="t" style="left:477.86px;top:466.07px;font-size:8.3px;color:#f2fafd;-webkit-text-stroke:0.0px #f2fafd;transform:scaleX(0.8500);">18</div>
<div class="t" style="left:503.96px;top:466.07px;font-size:8.3px;color:#f2fafd;-webkit-text-stroke:0.0px #f2fafd;transform:scaleX(0.8500);">27</div>
<div class="t" style="left:527.91px;top:466.07px;font-size:8.3px;color:#f2fafd;-webkit-text-stroke:0.0px #f2fafd;transform:scaleX(0.8500);">171</div>
<div class="t" style="left:555.96px;top:466.07px;font-size:8.3px;color:#f2fafd;-webkit-text-stroke:0.0px #f2fafd;transform:scaleX(0.8500);">22</div>
<div class="t" style="left:579.91px;top:466.07px;font-size:8.3px;color:#f2fafd;-webkit-text-stroke:0.0px #f2fafd;transform:scaleX(0.8500);">157</div>
<div class="t" style="left:605.90px;top:466.07px;font-size:8.3px;color:#f2fafd;-webkit-text-stroke:0.0px #f2fafd;transform:scaleX(0.8500);">133</div>
<div class="t" style="left:631.98px;top:466.07px;font-size:8.3px;color:#f2fafd;-webkit-text-stroke:0.0px #f2fafd;transform:scaleX(0.8500);">218</div>
<div class="a" style="left:0;top:478.8px;width:103.6px;height:3px;background:#2c3d57"></div>
<div class="a" style="left:103.6px;top:478.8px;width:581px;height:3px;background:#ececec"></div>
<div class="a" style="left:103.6px;top:478.7px;width:581px;height:0.8px;background:#cfd0d2"></div>
</body></html>
